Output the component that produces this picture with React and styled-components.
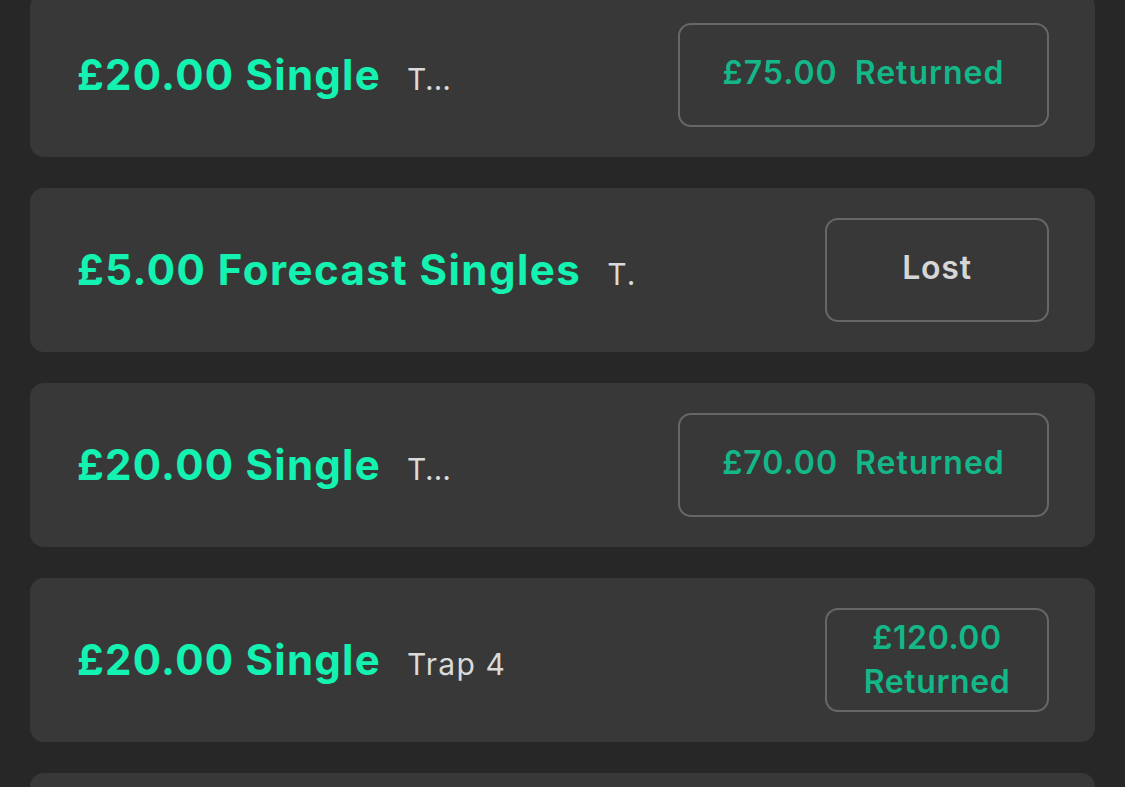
import React from "react";
import styled, { createGlobalStyle } from "styled-components";

const bets = [
  { id: 1, stake: "£20.00", type: "Single", runner: "T…", amount: "£75.00", status: "Returned", wide: true },
  { id: 2, stake: "£5.00", type: "Forecast Singles", runner: "T.", status: "Lost", loose: true },
  { id: 3, stake: "£20.00", type: "Single", runner: "T…", amount: "£70.00", status: "Returned", wide: true },
  { id: 4, stake: "£20.00", type: "Single", runner: "Trap 4", amount: "£120.00", status: "Returned" },
  { id: 5, stake: "", type: "", runner: "", status: "" },
];

function App() {
  return (
    <>
      <GlobalStyle />
      <BetList>
        {bets.map((bet) => (
          <BetCard key={bet.id}>
            {bet.stake && (
              <>
                <Info>
                  <Title $loose={bet.loose}>
                    {bet.stake} {bet.type}
                  </Title>
                  <Runner>{bet.runner}</Runner>
                </Info>
                <Outcome $wide={bet.wide}>
                  {bet.amount ? (
                    <Returned $wide={bet.wide}>
                      <span>{bet.amount}</span> <span>{bet.status}</span>
                    </Returned>
                  ) : (
                    <Lost>{bet.status}</Lost>
                  )}
                </Outcome>
              </>
            )}
          </BetCard>
        ))}
      </BetList>
    </>
  );
}

const GlobalStyle = createGlobalStyle`
  html, body {
    margin: 0;
    padding: 0;
    background: #272727;
    overflow: hidden;
  }
  body {
    font-family: Inter, "Liberation Sans", sans-serif;
  }
`;

const BetList = styled.div`
  display: flex;
  flex-direction: column;
  gap: 31px;
  margin-top: -7px;
  padding: 0 30px;
`;

const BetCard = styled.div`
  height: 164px;
  box-sizing: border-box;
  background: #383838;
  border-radius: 14px;
  display: flex;
  align-items: center;
  justify-content: space-between;
  padding: 0 46px 0 47px;
`;

const Info = styled.div`
  display: flex;
  align-items: baseline;
  gap: 26px;
  min-width: 0;
`;

const Title = styled.div`
  color: #14f2b1;
  font-size: 42px;
  font-weight: 700;
  white-space: nowrap;
  letter-spacing: ${(p) => (p.$loose ? "1.45px" : "1.25px")};
  margin-top: -2px;
`;

const Runner = styled.div`
  color: #dadada;
  font-size: 30px;
  font-weight: 400;
  white-space: nowrap;
  letter-spacing: 1.2px;
`;

const Outcome = styled.div`
  box-sizing: border-box;
  width: ${(p) => (p.$wide ? "371px" : "224px")};
  height: 104px;
  border: 2px solid #676767;
  border-radius: 13px;
  display: flex;
  align-items: center;
  justify-content: center;
  text-align: center;
  flex-shrink: 0;
`;

const Returned = styled.div`
  color: #13b788;
  font-size: 32px;
  font-weight: 600;
  line-height: 44px;
  letter-spacing: ${(p) => (p.$wide ? "1px" : "0.6px")};
  padding: 0 20px;
  margin-top: ${(p) => (p.$wide ? "-4px" : "0")};
  word-spacing: ${(p) => (p.$wide ? "8px" : "0")};
  span {
    white-space: nowrap;
  }
`;

const Lost = styled.div`
  color: #d6d6d6;
  font-size: 32px;
  font-weight: 600;
  letter-spacing: 0.8px;
  margin-top: -5px;
`;

export default App;
